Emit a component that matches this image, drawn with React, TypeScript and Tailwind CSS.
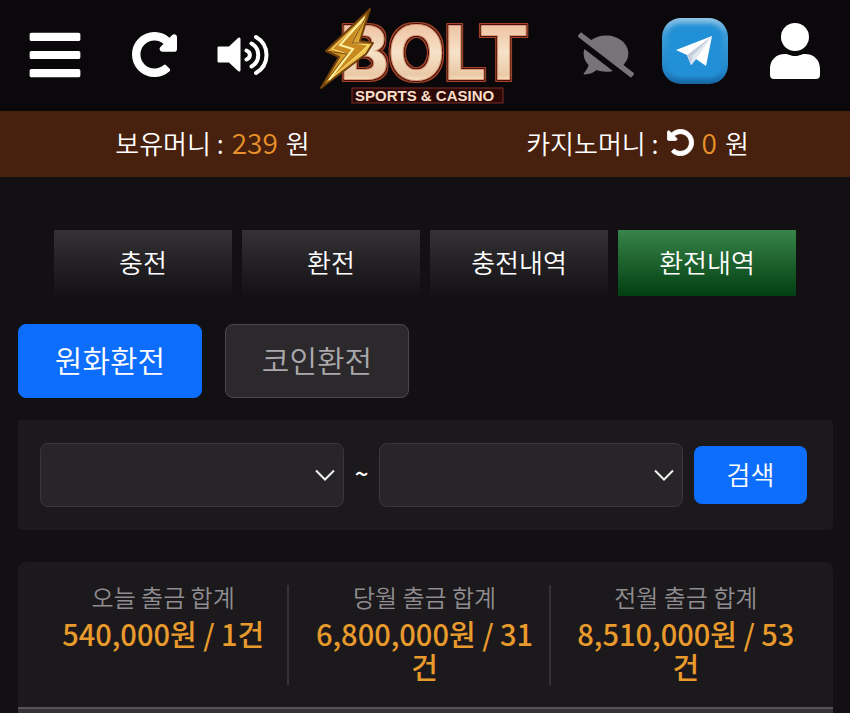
import { useState } from 'react'
import { FaBars, FaCommentSlash, FaRedoAlt, FaUndoAlt } from 'react-icons/fa'
import clsx from 'clsx'

const tabs = ['충전', '환전', '충전내역', '환전내역']
const kinds = ['원화환전', '코인환전']

const totals = [
  { label: '오늘 출금 합계', value: '540,000원 / 1건' },
  { label: '당월 출금 합계', value: '6,800,000원 / 31건' },
  { label: '전월 출금 합계', value: '8,510,000원 / 53건' },
]

function Logo() {
  return (
    <svg width="210" height="100" viewBox="320 6 210 100" role="img" aria-label="BOLT Sports & Casino">
      <defs>
        <linearGradient id="cream" x1="0" y1="0" x2="0" y2="1">
          <stop offset="0.2" stopColor="#efc3a4" />
          <stop offset="0.5" stopColor="#f6e2c8" />
          <stop offset="0.75" stopColor="#e9c9a6" />
          <stop offset="0.85" stopColor="#fff0d8" />
        </linearGradient>
        <linearGradient id="gold" x1="0" y1="0" x2="1" y2="1">
          <stop offset="0" stopColor="#ffe98a" />
          <stop offset="0.45" stopColor="#c98a1c" />
          <stop offset="0.7" stopColor="#f7cf5a" />
          <stop offset="1" stopColor="#8a4f0c" />
        </linearGradient>
        {/* dark rim, then a copper rim outside it */}
        <filter id="rims" x="-5%" y="-5%" width="110%" height="110%">
          <feMorphology in="SourceAlpha" operator="dilate" radius="2" result="outer" />
          <feFlood floodColor="#a4442c" />
          <feComposite in2="outer" operator="in" result="copper" />
          <feMorphology in="SourceAlpha" operator="dilate" radius="1" result="inner" />
          <feFlood floodColor="#4a1008" />
          <feComposite in2="inner" operator="in" result="dark" />
          <feMerge>
            <feMergeNode in="copper" />
            <feMergeNode in="dark" />
            <feMergeNode in="SourceGraphic" />
          </feMerge>
        </filter>
      </defs>
      <text x="341" y="78" fontFamily="Inter, sans-serif" fontWeight="700" fontSize="73" fill="url(#cream)" stroke="#dc9a76" strokeWidth="2" strokeLinejoin="round" paintOrder="stroke" filter="url(#rims)">
        BOLT
      </text>
      <path d="M371 8 327 50 340 56 322 87 367 53 374 42 361 40Z" fill="url(#gold)" stroke="#70400c" strokeWidth="2" strokeLinejoin="round" />
      <path d="M366 16 333 48 348 53 330 79 362 51 369 44 353 42Z" fill="#c88a20" stroke="#ffe27a" strokeWidth="1" />
      <path d="M366 16 341 44 354 48 330 79" fill="none" stroke="#fff0a0" strokeWidth="2" />
      <path d="M371 8 353 42 374 42M327 50 348 53 322 87" fill="none" stroke="#7a480e" strokeWidth="1" />
      <rect x="353" y="87" width="151" height="15" fill="#2c0906" stroke="#7c2c20" />
      <text x="356" y="100" fill="#f9dfc9" fontFamily="Liberation Sans, Arial, sans-serif" fontWeight="700" fontSize="15">
        SPORTS &amp; CASINO
      </text>
    </svg>
  )
}

function VolumeIcon() {
  return (
    <svg width="52" height="44" viewBox="0 0 52 44" fill="none" stroke="currentColor" strokeWidth="4" strokeLinecap="round">
      <path d="M2 13.500h10L21 5c1-1 2.500-.5 2.500 1v31c0 1.500-1.500 2-2.500 1l-9-8.500H2c-1 0-1.500-.5-1.500-1.500V15c0-1 .5-1.500 1.500-1.500Z" fill="currentColor" stroke="none" />
      <path d="M29.500 17.500c4.500 2 4.500 7 0 9M34.500 10.500c9 5 9 18 0 23M39 4c14 8 14 28 0 36" />
    </svg>
  )
}

function TelegramIcon() {
  return (
    <svg width="66" height="68" viewBox="0 0 66 68">
      <defs>
        <linearGradient id="tgEdge" x1="0" y1="0" x2="0" y2="1">
          <stop offset="0" stopColor="#8fc4e6" />
          <stop offset="0.25" stopColor="#3f9dd8" />
          <stop offset="0.8" stopColor="#2385c8" />
          <stop offset="1" stopColor="#1764a0" />
        </linearGradient>
        <filter id="tgSoft" x="-20%" y="-20%" width="140%" height="140%">
          <feGaussianBlur stdDeviation="2" />
        </filter>
      </defs>
      <rect y="1" width="66" height="66" rx="19" fill="url(#tgEdge)" />
      <rect x="5" y="7" width="56" height="54" rx="14" fill="#2390d6" filter="url(#tgSoft)" />
      <path d="M50 19 14 33 25 38 29 48 34 42 44 49Z" fill="#fff" />
      <path d="M50 19 25 38 29 48 31 39Z" fill="#c5d0df" />
      <path d="M50 19 31 39 29 48 34 42Z" fill="#e2e8f0" />
    </svg>
  )
}

function UserIcon() {
  return (
    <svg width="50" height="56" viewBox="0 0 50 56" fill="currentColor">
      <circle cx="25" cy="14" r="14" />
      <path d="M0 46c0-9 6-15 15-15 4 0 5 2 10 2s6-2 10-2c9 0 15 6 15 15v6a4 4 0 0 1-4 4H4a4 4 0 0 1-4-4Z" />
    </svg>
  )
}

function DateSelect({ label }: { label: string }) {
  return (
    <div className="relative min-w-0 flex-1">
      <select aria-label={label} className="block h-16 w-full appearance-none rounded-lg border border-[#39373b] bg-[#272528] px-4 text-2xl text-white">
        <option value=""></option>
      </select>
      <svg className="pointer-events-none absolute top-1/2 right-[9px] -translate-y-1/2" width="20" height="12" viewBox="0 0 20 12" fill="none" stroke="#f1f1f1" strokeWidth="2">
        <path d="M1 1.5 10 10.5 19 1.5" />
      </svg>
    </div>
  )
}

export default function App() {
  const [tab, setTab] = useState('환전내역')
  const [kind, setKind] = useState('원화환전')

  return (
    <div className="min-h-screen bg-[#121013] font-['Noto_Sans_CJK_KR',sans-serif] text-white">
      <header className="flex h-[111px] items-center justify-between bg-[#0a080a] px-[30px] pb-0.5">
        <div className="flex items-center">
          <button type="button" aria-label="메뉴"><FaBars className="-mx-1 size-[58px]" /></button>
          <button type="button" aria-label="새로고침" className="ml-[52px]"><FaRedoAlt className="size-[45px] stroke-current stroke-[16px]" /></button>
          <button type="button" aria-label="소리" className="ml-10"><VolumeIcon /></button>
        </div>
        <a href="#" className="block pt-1"><Logo /></a>
        <div className="flex items-center">
          <button type="button" aria-label="채팅" className="text-[#777477]"><FaCommentSlash className="size-14" /></button>
          <a href="#" aria-label="텔레그램" className="-mt-2 ml-7"><TelegramIcon /></a>
          <button type="button" aria-label="내 정보" className="-mt-2 ml-[42px]"><UserIcon /></button>
        </div>
      </header>

      <div className="grid h-[66px] grid-cols-2 items-center bg-[#48200e] pb-1 text-[26px] font-[350]">
        <p className="flex items-center justify-center gap-2">
          <span>보유머니 :</span>
          <span className="text-[28px] text-[#e8902a]">239</span>
          <span>원</span>
        </p>
        <p className="flex items-center justify-center gap-2">
          <span>카지노머니 :</span>
          <button type="button" aria-label="카지노머니 새로고침"><FaUndoAlt className="size-[27px] stroke-current stroke-[16px]" /></button>
          <span className="text-[28px] text-[#e8902a]">0</span>
          <span>원</span>
        </p>
      </div>

      <nav className="grid grid-cols-4 gap-[10px] px-[54px] pt-[53px]">
        {tabs.map(t => (
          <button key={t} type="button" onClick={() => setTab(t)}
            className={clsx('h-[66px] bg-linear-to-b pb-1 text-[26px] font-[350]',
              t === tab ? 'from-[#37854a] to-[#023f12]' : 'from-[#343235] to-[#131114]')}>
            {t}
          </button>
        ))}
      </nav>

      <main className="pt-7 pr-[17px] pl-[18px]">
        <div className="flex gap-[23px]">
          {kinds.map(k => (
            <button key={k} type="button" onClick={() => setKind(k)}
              className={clsx('h-[74px] w-[184px] rounded-lg border pb-1 text-[30px] font-[350]',
                k === kind ? 'border-[#0d6efd] bg-[#0d6efd]' : 'border-[#4a484c] bg-[#2b292c] text-[#aaa8ab]')}>
              {k}
            </button>
          ))}
        </div>

        <form onSubmit={e => e.preventDefault()} className="mt-[22px] flex h-[110px] items-center rounded-sm bg-[#1b191b] pr-[26px] pl-[22px]">
          <DateSelect label="시작일" />
          <span className="w-[35px] pb-1 text-center text-2xl font-medium">~</span>
          <DateSelect label="종료일" />
          <button type="submit" className="ml-[11px] h-[58px] w-[113px] rounded-lg bg-[#0d6efd] pb-1 text-[26px] font-[350]">검색</button>
        </form>

        <section className="mt-8 rounded-t-lg bg-[#1b191b] pt-[23px]">
          <dl className="grid grid-cols-3 gap-[11px] px-[21px] text-center">
            {totals.map((t, i) => (
              <div key={t.label} className={clsx('h-[100px] border-r-2 px-2', i < 2 ? 'border-[#343236]' : 'border-transparent')}>
                <dt className="text-2xl leading-6 font-[350] text-[#8f8d90]">{t.label}</dt>
                <dd className="mt-2 text-[29px] leading-[33px] font-medium text-[#e99a2c]">{t.value}</dd>
              </div>
            ))}
          </dl>
          <div className="mt-[22px] h-[6px] border-t-2 border-[#565357] bg-[#363337]" />
        </section>
      </main>
    </div>
  )
}
